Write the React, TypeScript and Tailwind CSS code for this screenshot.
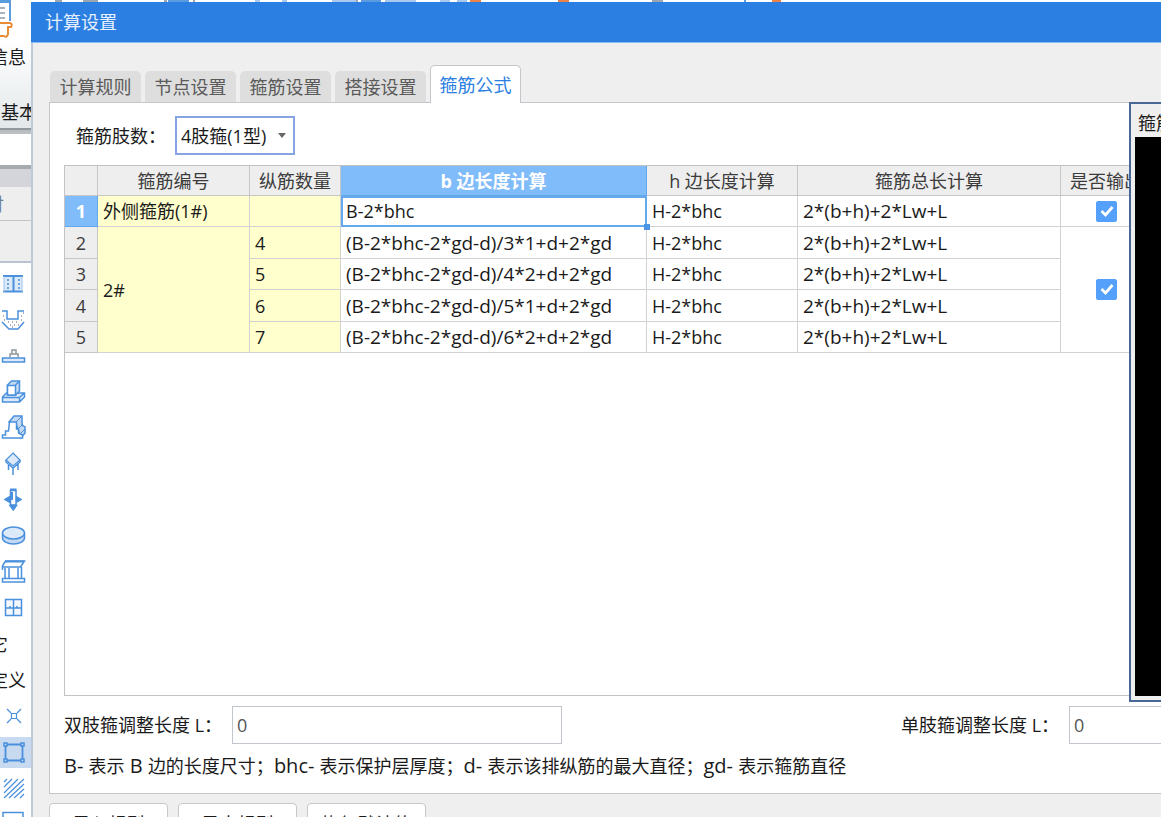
import React, { useState } from 'react';

interface FormulaRow {
    id: number;
    count: string;
    b: string;
    h: string;
    total: string;
}

const TABS = ['计算规则', '节点设置', '箍筋设置', '搭接设置', '箍筋公式'];

const ROWS: FormulaRow[] = [
    { id: 1, count: '', b: 'B-2*bhc', h: 'H-2*bhc', total: '2*(b+h)+2*Lw+L' },
    { id: 2, count: '4', b: '(B-2*bhc-2*gd-d)/3*1+d+2*gd', h: 'H-2*bhc', total: '2*(b+h)+2*Lw+L' },
    { id: 3, count: '5', b: '(B-2*bhc-2*gd-d)/4*2+d+2*gd', h: 'H-2*bhc', total: '2*(b+h)+2*Lw+L' },
    { id: 4, count: '6', b: '(B-2*bhc-2*gd-d)/5*1+d+2*gd', h: 'H-2*bhc', total: '2*(b+h)+2*Lw+L' },
    { id: 5, count: '7', b: '(B-2*bhc-2*gd-d)/6*2+d+2*gd', h: 'H-2*bhc', total: '2*(b+h)+2*Lw+L' }
];

const Icon: React.FC<{ children: React.ReactNode }> = ({ children }) => (
    <svg viewBox="0 0 26 26" className="h-[26px] w-[26px] shrink-0" fill="none" stroke="#4a90dc" strokeWidth="1.5">
        {children}
    </svg>
);

const TOOLS: { label: string; icon?: React.ReactNode; text?: string; pad?: string }[] = [
    {
        label: '筏板',
        icon: (
            <Icon>
                <path d="M4 5h18v16H4z" fill="#dbe9f9" stroke="none" />
                <path d="M3 5h20M3 20.500h20M13.500 5v16" strokeWidth="2" />
                <path d="M4 5v16M22 5v16" strokeWidth="1" stroke="#9cc2ec" />
                <path d="M8 8v11M19 8v11" strokeDasharray="2 2" />
            </Icon>
        )
    },
    {
        label: '集水坑',
        icon: (
            <Icon>
                <path d="M2 4h5v8h11V4h6M2 15l7 7h9l6-7" />
                <path d="M3 9h1M4 13h1M8 15h1M12 15h1M16 15h1M21 9h1M23 6h1M21 13h1M10 18h1M14 18h1M18 18h1M12 20h1" stroke="#8c969e" />
            </Icon>
        )
    },
    {
        label: '独立基础',
        icon: (
            <Icon>
                <path d="M10 14v-3h8v3M12 11V7h4v4" stroke="#8c969e" />
                <path d="M2.500 15h22v4h-22z" fill="#dbe9f9" />
            </Icon>
        )
    },
    {
        label: '承台',
        icon: (
            <Icon>
                <path d="M2.500 18l4-4h18v4l-5 5h-17zM2.500 18.500h17V23M19.500 18.500l5-4.500" fill="#dbe9f9" />
                <path d="M7.500 6l4-4h8v10l-4 4h-8z" fill="#c4daf3" />
                <path d="M7.500 6.500h8V16h-8zM15.500 6l4-4" fill="#fff" />
            </Icon>
        )
    },
    {
        label: '条形基础',
        icon: (
            <Icon>
                <path d="M9 7l5-6h8v9l3 2v6l-4 5-4-12z" fill="#c4daf3" />
                <path d="M16 7l6-6M18 14l5-5M21 18l4-4" strokeWidth="1" />
                <path d="M2.500 23v-3h3v-4h3l1-9h7v7h2v4l4 2v3z" fill="#fff" />
            </Icon>
        )
    },
    {
        label: '桩承台',
        icon: (
            <Icon>
                <path d="M13 2l7 7-7 6-7-6z" fill="#dbe9f9" strokeWidth="1.2" />
                <path d="M6 9v2l7 6 7-6V9M8.500 13v6M13 17v7M18 13v6" />
            </Icon>
        )
    },
    {
        label: '桩',
        icon: (
            <Icon>
                <path d="M5 12.500l5-3h6l5 3-5 3h-6z" fill="#4a90dc" />
                <path d="M10.500 3.500h5.500V18h-5.500z" fill="#fff" />
                <path d="M10 2.500h6.500M12 5v8" strokeWidth="2" />
                <path d="M10 18.500h6.500L13.200 23z" fill="#4a90dc" />
            </Icon>
        )
    },
    {
        label: '垫层',
        icon: (
            <Icon>
                <path d="M2.500 10v5c0 3 4.500 6 11 6s11-3 11-6v-5" fill="#c4daf3" />
                <ellipse cx="13.500" cy="10" rx="11" ry="6" fill="#dbe9f9" />
            </Icon>
        )
    },
    {
        label: '柱墩',
        icon: (
            <Icon>
                <path d="M2.500 7l3-5h19l-4 6h-18zM2.500 7v4M5 9v10M9 9v10M18 9v10M21.500 8v11M2.500 19.500h22V23h-22z" />
                <path d="M5 2.500h19" strokeWidth="2" />
            </Icon>
        )
    },
    {
        label: '门窗',
        icon: (
            <Icon>
                <path d="M5.500 4.500h16v16h-16z" fill="#f4f9ff" />
                <path d="M13.500 4.500v16M5.500 13h16M10 11v2M17 11v2" />
            </Icon>
        )
    },
    { label: '其它', text: '其它', pad: 'pr-[23px]' },
    { label: '自定义', text: '自定义', pad: 'pr-[5px]' },
    {
        label: '自定义点',
        icon: (
            <Icon>
                <path d="M11.500 10.500h5v5h-5zM7 6l4 4M21 6l-4 4M7 20l4-4M21 20l-4-4" strokeWidth="1.200" />
            </Icon>
        )
    },
    {
        label: '自定义面',
        icon: (
            <Icon>
                <path d="M5.500 5.500h17v16h-17z" strokeWidth="1.800" />
                <path d="M4 4h3v3H4zM21 4h3v3h-3zM4 20h3v3H4zM21 20h3v3h-3z" fill="#c8daf0" />
            </Icon>
        )
    },
    {
        label: '填充',
        icon: (
            <Icon>
                <path d="M4 7l3-3M4 12l8-8M4 18L18 4M4 23L24 4M9 23L24 9M14 23l10-9M20 23l4-4" strokeWidth="1.200" />
            </Icon>
        )
    },
    {
        label: '标注',
        icon: (
            <Icon>
                <path d="M3 1.500h20v20H3z" />
            </Icon>
        )
    }
];

const ToolStrip: React.FC = () => (
    <aside className="w-[31px] shrink-0 overflow-hidden bg-white">
        <div className="flex h-[128px] flex-col bg-linear-to-b from-white from-30% to-[#e3e8ea]">
            <svg viewBox="0 0 31 40" className="h-10 w-[31px] shrink-0" fill="none">
                <path d="M0 1h10v20" stroke="#5b9be0" strokeWidth="2" />
                <path d="M0 0h11v3H0z" fill="#5b9be0" />
                <path d="M0 8h5M0 13h5M0 18h5" stroke="#8c9aa8" strokeWidth="1.500" />
                <path d="M0 23h10q3 1 1 4H8v7q-1 4-4 2H0" stroke="#e88c35" strokeWidth="2" />
            </svg>
            <div className="flex h-[34px] items-center justify-end pr-[5px] whitespace-nowrap">信息</div>
            <div className="mt-auto flex h-8 items-center pl-px whitespace-nowrap">基本</div>
        </div>
        <div className="h-[6px] border-y-2 border-t-[#91999d] border-b-[#bcc0c2] bg-[#b8bcbe]" />
        <div className="h-[31px] bg-white" />
        <div className="h-[22px] border-t-4 border-[#a6abae] bg-[#d4d5da]" />
        <div className="flex h-[34px] items-center justify-end border-b border-[#c4c4c4] bg-[#eeeeee] pr-[27px] whitespace-nowrap text-[#6e7f8d]">付</div>
        <div className="h-[42px] border-b-2 border-[#b9c4d0] bg-[#eeeeee]" />
        <nav className="flex flex-col pt-[3px]">
            {TOOLS.map((tool) => (
                <button
                    key={tool.label}
                    aria-label={tool.label}
                    className={`flex h-9 w-full shrink-0 items-center whitespace-nowrap ${tool.text ? `justify-end ${tool.pad}` : ''}`}
                >
                    {tool.text ?? (
                        <span className={`flex h-[31px] w-full items-center ${tool.label === '自定义面' ? 'bg-[#c8daf0]' : ''}`}>{tool.icon}</span>
                    )}
                </button>
            ))}
        </nav>
    </aside>
);

const RibbonEdge: React.FC = () => (
    <svg className="h-[2px] w-full shrink-0 bg-white">
        <path d="M24 0h7v2h-7zM52 0h15v2H52zM133 0h3v2h-3zM162 0h2v2h-2zM325 0h2v2h-2zM621 0h11v2h-11z" fill="#9aa7b3" />
        <path d="M137 0h21v2h-21zM330 0h20v2h-20zM713 0h2v2h-2z" fill="#5b9be0" />
        <path d="M224 0h5v2h-5zM251 0h5v2h-5zM301 0h24v2h-24zM354 0h31v2h-31zM409 0h10v2h-10zM426 0h10v2h-10z" fill="#a9c8ee" />
        <path d="M439 0h11v2h-11zM527 0h11v2h-11zM741 0h9v2h-9z" fill="#ee8247" />
    </svg>
);

const OutputCheck: React.FC<{ label: string }> = ({ label }) => {
    const [checked, setChecked] = useState(true);
    return (
        <label className="relative mx-auto flex h-[21px] w-[21px]">
            <input
                type="checkbox"
                aria-label={label}
                checked={checked}
                onChange={() => setChecked(!checked)}
                className="h-[21px] w-[21px] appearance-none rounded-[2px] border border-[#54a0fb] bg-white checked:bg-[#54a0fb]"
            />
            <svg viewBox="0 0 21 21" className="pointer-events-none absolute inset-0" fill="none" stroke="#fff" strokeWidth="2.800">
                <path d="M5.500 10l4 4 7-8" />
            </svg>
        </label>
    );
};

const headCell = 'border-r border-b border-[#c6c6c6] bg-[#eeeeee] p-0 font-normal text-[#3c3c3c] whitespace-nowrap';
const bodyCell = 'border-r border-b border-[#d2d2d2] py-0 pr-0 pl-[5px]';

const FormulaTable: React.FC = () => (
    <table className="w-[1087px] table-fixed border-separate border-spacing-0 text-left leading-6">
        <colgroup>
            <col className="w-[33px]" />
            <col className="w-[152px]" />
            <col className="w-[91px]" />
            <col className="w-[306px]" />
            <col className="w-[151px]" />
            <col className="w-[263px]" />
            <col className="w-[91px]" />
        </colgroup>
        <thead>
            <tr className="h-[30px] text-center">
                <th className={headCell} />
                <th className={headCell}>箍筋编号</th>
                <th className={headCell}>纵筋数量</th>
                <th className="border-r border-b border-[#62a6ec] bg-[#80bbfa] p-0 font-bold text-white">b 边长度计算</th>
                <th className={headCell}>h 边长度计算</th>
                <th className={headCell}>箍筋总长计算</th>
                <th className={headCell}>是否输出</th>
            </tr>
        </thead>
        <tbody>
            {ROWS.map((row, i) => (
                <tr key={row.id} className="odd:h-[31px] even:h-8">
                    <th className={i === 0 ? 'border-r border-b border-[#62a6ec] bg-[#80bbfa] p-0 text-center font-bold text-white' : `${headCell} text-center`}>
                        {row.id}
                    </th>
                    {i === 0 && <td className={`${bodyCell} bg-[#ffffcd]`}>外侧箍筋(1#)</td>}
                    {i === 1 && <td rowSpan={4} className={`${bodyCell} bg-[#ffffcd]`}>2#</td>}
                    <td className={`${bodyCell} bg-[#ffffcd]`}>{row.count}</td>
                    {i === 0 ? (
                        <td className="relative border-b border-[#66a8ec] p-0 pl-[5px] outline-2 -outline-offset-2 outline-[#66a8ec]">
                            {row.b}
                            <span className="absolute -right-[3px] -bottom-1 z-10 h-[6px] w-[6px] bg-[#4a96e4]" />
                        </td>
                    ) : (
                        <td className={`${bodyCell} text-[19px]`}>{row.b}</td>
                    )}
                    <td className={bodyCell}>{row.h}</td>
                    <td className={`${bodyCell} text-[19px]`}>{row.total}</td>
                    {i === 0 && <td className="border-r border-b border-[#d2d2d2] p-0"><OutputCheck label="外侧箍筋(1#) 是否输出" /></td>}
                    {i === 1 && <td rowSpan={4} className="border-r border-b border-[#d2d2d2] p-0"><OutputCheck label="2# 是否输出" /></td>}
                </tr>
            ))}
        </tbody>
    </table>
);

const PreviewWindow: React.FC = () => (
    <div className="absolute -top-px right-0 z-20 flex h-[600px] w-8 flex-col overflow-hidden border-2 border-r-0 border-[#4a6897] bg-[#efefef] pb-1 pl-1">
        <div className="flex h-[33px] shrink-0 items-center pt-1 pl-[3px] whitespace-nowrap">箍筋</div>
        <div className="flex-1 bg-black" />
    </div>
);

const Latin: React.FC<{ children: React.ReactNode }> = ({ children }) => <span className="text-xl leading-none">{children}</span>;

export default function App() {
    const [activeTab, setActiveTab] = useState('箍筋公式');
    const [doubleLength, setDoubleLength] = useState('0');
    const [singleLength, setSingleLength] = useState('0');

    return (
        <div className="flex h-screen overflow-hidden bg-white font-['Open_Sans','Noto_Sans_CJK_SC',sans-serif] text-lg leading-7 text-[#1a1a1a]">
            <ToolStrip />
            <div className="flex h-[calc(100vh+27px)] min-w-0 flex-1 flex-col">
                <RibbonEdge />
                <header className="flex h-[41px] shrink-0 items-center border-b border-[#8dbcf2] bg-[#2b7fe2] pl-[14px] text-[#e6f0fc]">
                    <h1>计算设置</h1>
                </header>
                <div className="flex flex-1 flex-col border-l-2 border-[#bfc9d8] bg-[#efefef] pt-[22px] pl-4">
                    <div role="tablist" className="flex h-[37px] shrink-0 items-end gap-1 pl-px">
                        {TABS.map((tab) => (
                            <button
                                key={tab}
                                role="tab"
                                aria-selected={tab === activeTab}
                                onClick={() => setActiveTab(tab)}
                                className={
                                    tab === activeTab
                                        ? 'relative z-10 -mb-px h-[38px] w-[91px] rounded-t-[5px] border border-b-0 border-[#c3c6ca] bg-white text-[#2b7fe2]'
                                        : 'h-[31px] w-[91px] rounded-t-[5px] bg-[#dedede] text-[#5a5a5a]'
                                }
                            >
                                {tab}
                            </button>
                        ))}
                    </div>
                    <main className="relative flex flex-1 flex-col border border-r-0 border-[#c3c6ca] bg-white pt-[13px] pl-[14px]">
                        <div className="flex h-[39px] items-center pl-3">
                            <label htmlFor="limbs" className="w-[99px] whitespace-nowrap">箍筋肢数：</label>
                            <div className="relative">
                                <select id="limbs" className="h-[39px] w-[120px] appearance-none border-2 border-[#86a3e3] bg-white pl-1">
                                    <option>4肢箍(1型)</option>
                                </select>
                                <svg viewBox="0 0 10 6" className="pointer-events-none absolute top-[17px] right-2 h-[6px] w-[10px]">
                                    <path d="M1 0h8L5 5z" fill="#666" />
                                </svg>
                            </div>
                        </div>
                        <div className="mt-[10px] flex-1 overflow-hidden border border-r-0 border-[#c3c3c3]">
                            <FormulaTable />
                        </div>
                        <div className="mt-[10px] flex h-[38px] items-center justify-between">
                            <div className="flex items-center">
                                <label htmlFor="double-length" className="w-[168px] whitespace-nowrap">双肢箍调整长度 L：</label>
                                <input
                                    id="double-length"
                                    value={doubleLength}
                                    onChange={(e) => setDoubleLength(e.target.value)}
                                    className="h-[38px] w-[330px] border border-[#c0c6cc] bg-white px-1 text-[#555]"
                                />
                            </div>
                            <div className="flex items-center">
                                <label htmlFor="single-length" className="w-[168px] whitespace-nowrap">单肢箍调整长度 L：</label>
                                <input
                                    id="single-length"
                                    value={singleLength}
                                    onChange={(e) => setSingleLength(e.target.value)}
                                    className="h-[38px] w-[92px] border border-r-0 border-[#c0c6cc] bg-white px-1 text-[#555]"
                                />
                            </div>
                        </div>
                        <p className="mt-2 mb-[13px] h-7 whitespace-nowrap">
                            <Latin>B- </Latin>表示<Latin> B </Latin>边的长度尺寸；<Latin>bhc- </Latin>表示保护层厚度；<Latin>d- </Latin>表示该排纵筋的最大直径；<Latin>gd- </Latin>表示箍筋直径
                        </p>
                        <PreviewWindow />
                    </main>
                    <footer className="flex h-[50px] shrink-0 gap-[10px] pt-[9px]">
                        {['导入规则', '导出规则', '恢复默认值'].map((label) => (
                            <button key={label} className="h-[41px] w-[119px] rounded-[4px] border border-[#c8c8c8] bg-white">
                                {label}
                            </button>
                        ))}
                    </footer>
                </div>
            </div>
        </div>
    );
}
